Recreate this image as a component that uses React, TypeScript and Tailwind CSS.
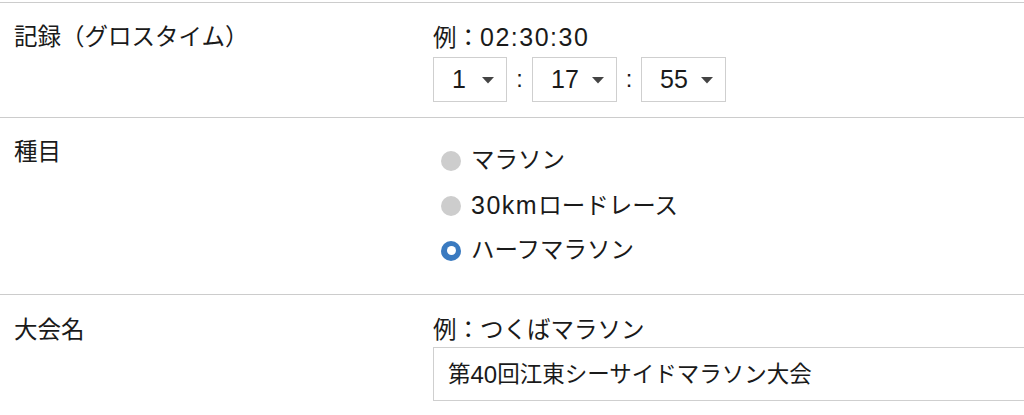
const font = { fontFamily: '"Liberation Sans", "Noto Sans CJK JP", sans-serif' }

// latin runs render a touch bigger than the kana, like the original font does
function L({ children, className }: { children: React.ReactNode; className?: string }) {
    return <span className={`text-[25px] ${className ?? ''}`}>{children}</span>
}

function Caret() {
    return (
        <svg width="14" height="8" viewBox="0 0 14 8" className="shrink-0">
            <path d="M1 1h12L7 7.5z" fill="#444" />
        </svg>
    )
}

function TimeSelect({ value, className }: { value: string; className: string }) {
    return (
        <div className={`flex h-[45px] items-center justify-between border border-[#cfcfcf] bg-white pl-[18px] pr-[11px] ${className}`}>
            <L>{value}</L>
            <Caret />
        </div>
    )
}

function Radio({ children, checked }: { children: React.ReactNode; checked?: boolean }) {
    return (
        <label className="flex h-[45px] items-center gap-[10px]">
            {checked ? (
                <span className="flex h-[20px] w-[20px] shrink-0 items-center justify-center rounded-full bg-[#3a7ac0]">
                    <span className="h-[9px] w-[9px] rounded-full bg-white" />
                </span>
            ) : (
                <span className="h-[20px] w-[20px] shrink-0 rounded-full bg-[#cdcdcd]" />
            )}
            <span>{children}</span>
        </label>
    )
}

function Row({ label, children, className }: { label: string; children: React.ReactNode; className?: string }) {
    return (
        <div className={`grid grid-cols-[433px_1fr] border-t border-[#cccccc] ${className ?? ''}`}>
            <div className="pl-[14px]">{label}</div>
            <div>{children}</div>
        </div>
    )
}

export default function App() {
    return (
        <div
            className="h-[415px] w-[1024px] overflow-hidden bg-white pt-[2px] text-[23.5px] leading-[33px] text-[#1a1a1a]"
            style={font}
        >
            <Row label="記録（グロスタイム）" className="h-[115px] pt-[18px]">
                <div>
                    例：<L className="tracking-[1.5px]">02:30:30</L>
                </div>
                <div className="mt-[2px] flex items-center">
                    <TimeSelect value="1" className="w-[74px]" />
                    <span className="w-[25px] text-center">:</span>
                    <TimeSelect value="17" className="w-[85px]" />
                    <span className="w-[24px] text-center">:</span>
                    <TimeSelect value="55" className="w-[85px]" />
                </div>
            </Row>

            <Row label="種目" className="h-[177px] pt-[18px]">
                <div className="pl-[8px] pt-[2px]">
                    <Radio>マラソン</Radio>
                    <Radio>
                        <L className="tracking-[1.5px]">30km</L>ロードレース
                    </Radio>
                    <Radio checked>ハーフマラソン</Radio>
                </div>
            </Row>

            <Row label="大会名" className="pt-[19px]">
                <div>例：つくばマラソン</div>
                <div className="flex h-[54px] w-[640px] items-center border border-[#cfcfcf] pl-[14px] text-[22.5px]">
                    第<span className="text-[24px]">40</span>回江東シーサイドマラソン大会
                </div>
            </Row>
        </div>
    )
}
